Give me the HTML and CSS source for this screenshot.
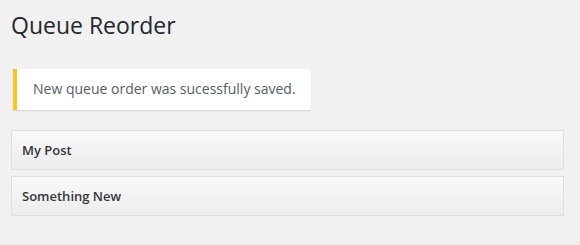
FILE: index.html
```html
<!DOCTYPE html>
<html>
<head>
<meta charset="utf-8">
<link rel="stylesheet" href="styles.css">
</head>
<body>
<div class="wrap">
  <h1 class="title">Queue Reorder</h1>
  <div class="notice"><p>New queue order was sucessfully saved.</p></div>
  <ul class="queue">
    <li class="item">My Post</li>
    <li class="item">Something New</li>
  </ul>
</div>
</body>
</html>
```
FILE: styles.css
```css
html, body {
  margin: 0;
  padding: 0;
  background: #f1f1f1;
}
body {
  font-family: "Open Sans", "Liberation Sans", sans-serif;
  color: #444;
}
.wrap {
  padding: 0 16px 0 11px;
}
.title {
  margin: 0;
  padding: 11px 0 0;
  font-size: 23px;
  font-weight: 400;
  line-height: 29px;
  color: #23282d;
}
.notice {
  width: fit-content;
  margin: 29px 0 0 2px;
  background: #fff;
  border-left: 4px solid #ffc21f;
  box-shadow: 0 1px 1px 0 rgba(0, 0, 0, 0.1);
  padding: 10px 15px 11px 16px;
}
.notice p {
  margin: 0;
  font-size: 14px;
  line-height: 20px;
  color: #555d66;
}
.queue {
  list-style: none;
  margin: 20px 0 0;
  padding: 0;
  display: flex;
  flex-direction: column;
  gap: 6px;
}
.item {
  border: 1px solid #dfdfdf;
  background: linear-gradient(to bottom, #f9f9f9, #ececec);
  padding: 10px 10px 10px;
  font-size: 13px;
  font-weight: 600;
  line-height: 18px;
  color: #32373c;
}
```
